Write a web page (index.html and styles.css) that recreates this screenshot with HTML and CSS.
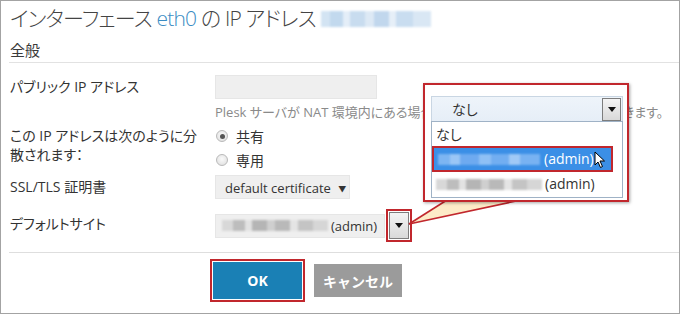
FILE: index.html
```html
<!DOCTYPE html>
<html lang="ja">
<head>
<meta charset="utf-8">
<title>IP アドレス</title>
<link rel="stylesheet" href="styles.css">
</head>
<body>
<div class="page">
  <h1 class="title">インターフェース <span class="link">eth0</span> の IP アドレス <span class="blur-ip"></span></h1>
  <div class="section">全般</div>

  <div class="form">
    <div class="row row-public">
      <div class="label">パブリック IP アドレス</div>
      <div class="field">
        <div class="input"></div>
        <div class="help">Plesk サーバが NAT 環境内にある場合は、パブリック IP アドレスを指定できます。</div>
      </div>
    </div>

    <div class="row row-dist">
      <div class="label label-two">この IP アドレスは次のように分<br>散されます：</div>
      <div class="field">
        <div class="radio-row"><span class="radio checked"></span>共有</div>
        <div class="radio-row"><span class="radio"></span>専用</div>
      </div>
    </div>

    <div class="row row-ssl">
      <div class="label">SSL/TLS 証明書</div>
      <div class="field">
        <div class="select select-cert">default certificate <span class="caret">▼</span></div>
      </div>
    </div>

    <div class="row row-site">
      <div class="label">デフォルトサイト</div>
      <div class="field field-site">
        <div class="select select-site"><span class="blur blur-gray"></span>(admin)</div>
        <div class="arrow-btn arrow-hl"><span class="tri"></span></div>
      </div>
    </div>
  </div>

  <div class="actions">
    <button class="btn btn-ok">OK</button>
    <button class="btn btn-cancel">キャンセル</button>
  </div>

  <svg class="tail" width="140" height="40" viewBox="0 0 140 40">
    <polygon points="8,27 46,3 120,3" fill="#fdebc8"/>
    <line x1="8" y1="27" x2="46" y2="3" stroke="#c1272d" stroke-width="1.6"/>
    <line x1="8" y1="27" x2="120" y2="3" stroke="#c1272d" stroke-width="1.6"/>
  </svg>

  <div class="callout">
    <div class="dd-select">
      <span class="dd-value">なし</span>
      <div class="arrow-btn dd-arrow"><span class="tri"></span></div>
    </div>
    <ul class="dd-list">
      <li class="dd-item">なし</li>
      <li class="dd-item dd-active"><span class="blur blur-blue"></span>(admin)
        <svg class="cursor" width="12" height="18" viewBox="0 0 12 18"><path d="M1 1 L1 14 L4 11 L6.5 16.5 L8.5 15.5 L6 10 L10.5 10 Z" fill="#fff" stroke="#000" stroke-width="1"/></svg>
      </li>
      <li class="dd-item"><span class="blur blur-gray"></span>(admin)</li>
    </ul>
  </div>
</div>
</body>
</html>
```

FILE: styles.css
```css
html, body {
  margin: 0;
  padding: 0;
  background: #fff;
}

body {
  font-family: "Open Sans", "Noto Sans CJK JP", sans-serif;
  font-feature-settings: "palt" 1;
  color: #333;
}

.page {
  position: relative;
  width: 680px;
  height: 314px;
  box-sizing: border-box;
  border: 1px solid #a3a3a3;
  padding-left: 8px;
  overflow: hidden;
}

.title {
  margin: 0;
  padding: 2px 0 0 1px;
  font-size: 21px;
  line-height: 30px;
  font-weight: 300;
  letter-spacing: -0.8px;
  color: #444;
  white-space: nowrap;
}

.link {
  color: #3b8cc3;
}

.blur-ip {
  display: inline-block;
  width: 110px;
  height: 16px;
  vertical-align: -1px;
  background:
    linear-gradient(90deg, #d3e4f3 0 8%, #c2d9ee 8% 20%, #e4eef8 20% 26%, #c8dcef 26% 40%, #dde9f5 40% 48%, #c1d7ed 48% 62%, #e6eff8 62% 68%, #c9ddf0 68% 84%, #d9e7f4 84% 100%);
  filter: blur(1px);
}

.section {
  margin-top: 7px;
  padding-left: 1px;
  font-size: 15px;
  line-height: 20px;
  padding-bottom: 2px;
  border-bottom: 1px solid #e2e2e2;
  color: #3a3a3a;
}

.form {
  padding-top: 12px;
}

.row {
  display: grid;
  grid-template-columns: 206px 1fr;
  font-size: 14px;
}

.label {
  padding-left: 1px;
  line-height: 24px;
  color: #333;
}

.label-two {
  line-height: 19px;
  padding-top: 2px;
}

.input {
  width: 162px;
  height: 24px;
  background: #efefef;
  border: 1px solid #e6e6e6;
  box-sizing: border-box;
}

.help {
  margin-top: 4px;
  font-size: 13px;
  line-height: 18px;
  color: #8a8a8a;
  white-space: nowrap;
}

.row-dist {
  margin-top: 3px;
}

.radio-row {
  display: flex;
  align-items: center;
  gap: 8px;
  height: 24px;
  padding-left: 1px;
}

.radio {
  width: 12px;
  height: 12px;
  box-sizing: border-box;
  border-radius: 50%;
  border: 1px solid #b9b9b9;
  background: radial-gradient(circle at 50% 40%, #fafafa, #dcdcdc);
  position: relative;
}

.radio.checked::after {
  content: "";
  position: absolute;
  left: 2.5px;
  top: 2.5px;
  width: 5px;
  height: 5px;
  border-radius: 50%;
  background: #555;
}

.row-ssl {
  margin-top: 3px;
}

.select {
  height: 24px;
  line-height: 24px;
  box-sizing: border-box;
  background: #efefef;
  border: 1px solid #e6e6e6;
  font-size: 13px;
  color: #333;
  white-space: nowrap;
}

.select-cert {
  width: 135px;
  padding-left: 9px;
}

.caret {
  font-size: 8px;
  margin-left: 4px;
  vertical-align: 1px;
}

.row-site {
  margin-top: 13px;
}

.field-site {
  display: flex;
  align-items: center;
  gap: 4px;
}

.select-site {
  width: 170px;
  display: flex;
  align-items: center;
  padding-left: 6px;
}

.blur {
  display: inline-block;
  height: 11px;
  filter: blur(0.8px);
}

.blur-gray {
  width: 106px;
  margin-right: 3px;
  background: linear-gradient(90deg, #d8d8d8 0 10%, #bdbdbd 10% 22%, #e2e2e2 22% 28%, #b5b5b5 28% 42%, #cfcfcf 42% 50%, #b9b9b9 50% 64%, #e4e4e4 64% 72%, #c4c4c4 72% 86%, #d6d6d6 86% 100%);
}

.blur-blue {
  width: 102px;
  margin-right: 4px;
  background: linear-gradient(90deg, #7db5f2 0 12%, #9ac6f6 12% 22%, #6eaaf0 22% 40%, #8fc0f5 40% 52%, #72aef1 52% 70%, #a0c9f6 70% 80%, #78b2f2 80% 100%);
}

.arrow-btn {
  width: 20px;
  height: 25px;
  box-sizing: border-box;
  border: 1px solid #7d7d7d;
  background: linear-gradient(#f4f4f4, #d9d9d9);
  display: flex;
  align-items: center;
  justify-content: center;
}

.tri {
  width: 0;
  height: 0;
  border-left: 4px solid transparent;
  border-right: 4px solid transparent;
  border-top: 5px solid #111;
}

.arrow-hl {
  height: 27px;
  outline: 2px solid #c1272d;
  outline-offset: 1px;
}

.actions {
  margin-top: 13px;
  border-top: 1px solid #dedede;
  padding: 9px 0 0 204px;
  display: flex;
  align-items: center;
  gap: 12px;
}

.btn {
  border: none;
  font-family: "Open Sans", "Noto Sans CJK JP", sans-serif;
  font-weight: 700;
  font-size: 14px;
  color: #fff;
  padding: 0;
}

.btn-ok {
  width: 89px;
  height: 37px;
  background: #1a80b5;
  outline: 2px solid #c1272d;
  outline-offset: 1px;
}

.btn-cancel {
  width: 88px;
  height: 33px;
  background: #9b9b9b;
}

.tail {
  position: absolute;
  left: 400px;
  top: 196px;
}

.callout {
  position: absolute;
  left: 422px;
  top: 82px;
  width: 206px;
  height: 119px;
  box-sizing: border-box;
  border: 2px solid #c1272d;
  background: #fff;
  box-shadow: 1px 1px 3px rgba(0, 0, 0, 0.35);
  padding: 11px 4px 0 6px;
}

.dd-select {
  height: 25px;
  box-sizing: border-box;
  border: 1px solid #c9d6e3;
  border-bottom: none;
  background: linear-gradient(#eef4fa, #e6eef7);
  display: flex;
  align-items: center;
  justify-content: space-between;
  padding-left: 20px;
  font-size: 14px;
}

.dd-arrow {
  width: 19px;
  height: 23px;
  margin-right: 1px;
}

.dd-list {
  list-style: none;
  margin: 0;
  padding: 1px 1px 0;
  height: 77px;
  box-sizing: border-box;
  border: 1px solid #9fb2c6;
  background: #fff;
}

.dd-item {
  height: 24px;
  line-height: 24px;
  padding-left: 3px;
  font-size: 14px;
  display: flex;
  align-items: center;
  white-space: nowrap;
}

.dd-active {
  height: 22px;
  margin: 1px 10px 2px 1px;
  padding-left: 4px;
  background: #3b8fe6;
  color: #fff;
  outline: 2px solid #c1272d;
  position: relative;
}

.cursor {
  position: absolute;
  left: 160px;
  top: 3px;
}
```
